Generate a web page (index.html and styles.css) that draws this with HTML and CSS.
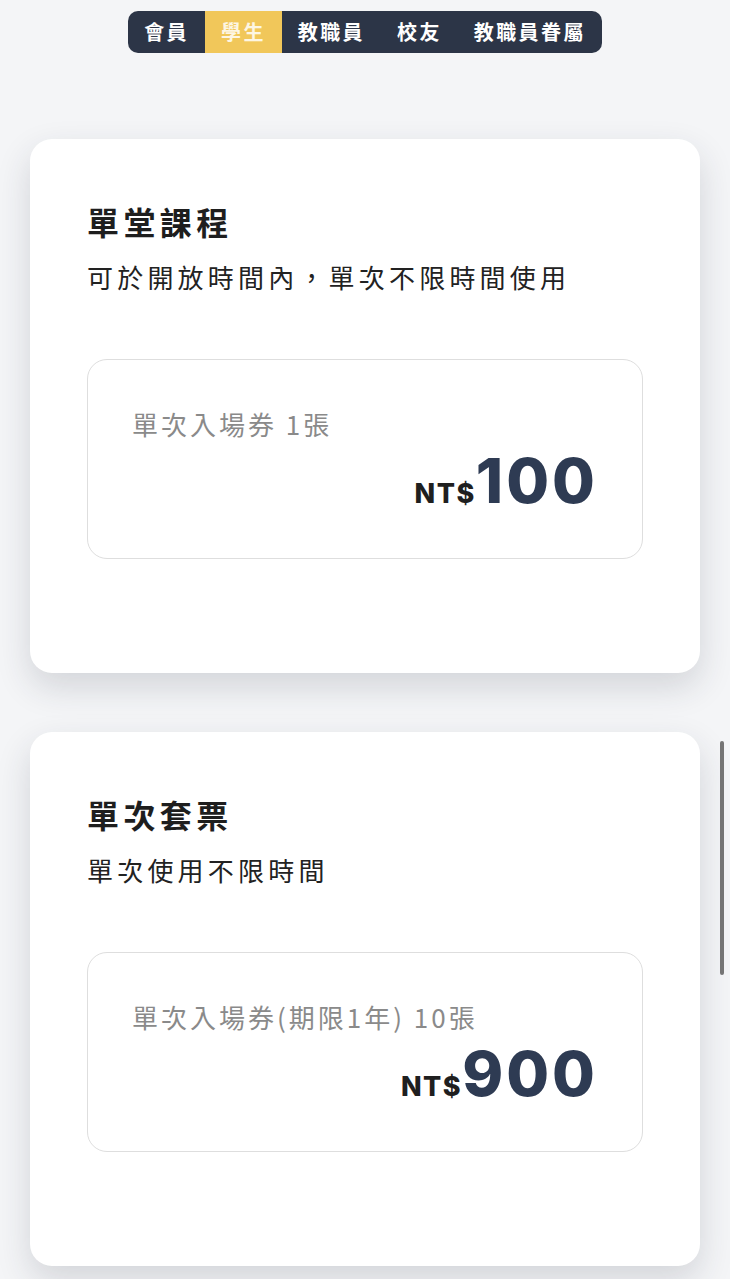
FILE: index.html
```html
<!DOCTYPE html>
<html lang="zh-Hant">
<head>
<meta charset="utf-8">
<title>票價</title>
<link rel="stylesheet" href="styles.css">
</head>
<body>
<div class="page">
  <nav class="tabs">
    <span class="tab">會員</span>
    <span class="tab active">學生</span>
    <span class="tab">教職員</span>
    <span class="tab">校友</span>
    <span class="tab">教職員眷屬</span>
  </nav>

  <section class="card">
    <h2 class="card-title">單堂課程</h2>
    <p class="card-desc">可於開放時間內，單次不限時間使用</p>
    <div class="plan">
      <div class="plan-label">單次入場券 1張</div>
      <div class="plan-price"><span class="cur">NT$</span><span class="num">100</span></div>
    </div>
  </section>

  <section class="card">
    <h2 class="card-title">單次套票</h2>
    <p class="card-desc">單次使用不限時間</p>
    <div class="plan">
      <div class="plan-label">單次入場券(期限1年) 10張</div>
      <div class="plan-price"><span class="cur">NT$</span><span class="num">900</span></div>
    </div>
  </section>
</div>
<div class="scrollbar"></div>
</body>
</html>
```

FILE: styles.css
```css
html, body {
  margin: 0;
  padding: 0;
  height: 100%;
  overflow: hidden;
}
body {
  background: #f4f5f7;
  font-family: "Noto Sans CJK TC", "Noto Sans", sans-serif;
  color: #222;
}
.page {
  display: flex;
  flex-direction: column;
  align-items: center;
  padding-top: 11px;
}
.tabs {
  display: flex;
  height: 42px;
  background: #2c3547;
  border-radius: 10px;
  overflow: hidden;
}
.tab {
  display: flex;
  align-items: center;
  padding: 0 16px;
  font-size: 20px;
  font-weight: 700;
  letter-spacing: 2.4px;
  color: #fff;
  line-height: 1;
}
.tab.active {
  background: #f1c75a;
  color: #fdf6e3;
}
.card {
  align-self: stretch;
  margin: 86px 30px 0;
  background: #fff;
  border-radius: 22px;
  box-shadow: 0 14px 34px rgba(40, 45, 60, 0.16);
  padding: 60px 57px 114px;
  box-sizing: border-box;
  height: 534px;
}
.card + .card {
  margin-top: 59px;
}
.card-title {
  margin: 0;
  font-size: 32px;
  line-height: 45px;
  font-weight: 700;
  letter-spacing: 4.4px;
  color: #1e1e1e;
}
.card-desc {
  margin: 13px 0 0;
  font-size: 26px;
  line-height: 39px;
  font-weight: 400;
  letter-spacing: 4.2px;
  color: #222;
}
.plan {
  margin-top: 63px;
  height: 200px;
  box-sizing: border-box;
  border: 1.5px solid #dedede;
  border-radius: 20px;
  padding: 45px 46px 0 44px;
}
.plan-label {
  font-size: 26px;
  line-height: 38px;
  letter-spacing: 3px;
  color: #8a8a8a;
}
.plan-price {
  display: flex;
  justify-content: flex-end;
  align-items: baseline;
  margin-top: 7px;
  font-family: Inter, "Liberation Sans", sans-serif;
  line-height: 1;
}
.cur {
  font-size: 27px;
  font-weight: 800;
  letter-spacing: 1.5px;
  color: #1f1f1f;
}
.num {
  font-size: 62px;
  font-weight: 800;
  color: #2e3b53;
  letter-spacing: 3px;
  margin-right: -2px;
}
.scrollbar {
  position: fixed;
  right: 6px;
  top: 741px;
  width: 4px;
  height: 234px;
  border-radius: 2px;
  background: #757575;
}
```
